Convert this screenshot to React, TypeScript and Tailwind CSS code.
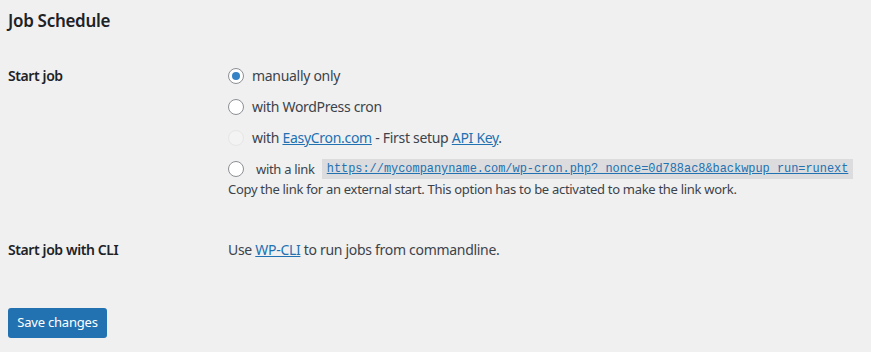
import React, { useState } from 'react';

const font = { fontFamily: '"Noto Sans", "Open Sans", sans-serif' };

const Radio: React.FC<{ checked?: boolean; disabled?: boolean; onClick?: () => void }> = ({ checked, disabled, onClick }) => (
    <span
        onClick={disabled ? undefined : onClick}
        className={`inline-flex h-4 w-4 shrink-0 items-center justify-center rounded-full border ${disabled ? 'border-[#e6e6e6] bg-[#f3f3f3]' : 'border-[#8c8f94] bg-white cursor-pointer'}`}
    >
        {checked && <span className="h-2 w-2 rounded-full bg-[#3582c4]" />}
    </span>
);

const App: React.FC = () => {
    const [mode, setMode] = useState<'manual' | 'wpcron' | 'link'>('manual');

    return (
        <div className="min-h-screen bg-[#f0f0f1] px-2 text-[#3c434a]" style={font}>
            <h2 className="pt-[10px] text-[17px] leading-[22px] font-semibold tracking-[-0.3px] text-[#1d2327]">Job Schedule</h2>

            <div className="mt-[34px] grid grid-cols-[220px_1fr]">
                <div className="text-[14px] leading-[20px] font-semibold tracking-[-0.4px] text-[#1d2327]">Start job</div>
                <div className="text-[14px] leading-[20px] tracking-[-0.3px]">
                    <div className="flex flex-col gap-[11px]">
                        <label className="flex items-center gap-2">
                            <Radio checked={mode === 'manual'} onClick={() => setMode('manual')} />
                            <span>manually only</span>
                        </label>
                        <label className="flex items-center gap-2">
                            <Radio checked={mode === 'wpcron'} onClick={() => setMode('wpcron')} />
                            <span>with WordPress cron</span>
                        </label>
                        <label className="flex items-center gap-2">
                            <Radio disabled />
                            <span>
                                with <a href="#" className="text-[#2271b1] underline">EasyCron.com</a> - First setup{' '}
                                <a href="#" className="text-[#2271b1] underline">API Key</a>.
                            </span>
                        </label>
                    </div>
                    <label className="mt-[11px] flex items-center">
                        <Radio checked={mode === 'link'} onClick={() => setMode('link')} />
                        <span className="ml-3 text-[13px]">with a link</span>
                        <code
                            className="ml-[7px] whitespace-nowrap bg-[#dcdcde] px-[5px] text-[11.92px] leading-[20px] tracking-normal text-[#2271b1] underline"
                            style={{ fontFamily: '"Liberation Mono", monospace' }}
                        >
                            https://mycompanyname.com/wp-cron.php?_nonce=0d788ac8&amp;backwpup_run=runext
                        </code>
                    </label>
                    <p className="text-[13px] leading-[20px] text-[#3c434a]">
                        Copy the link for an external start. This option has to be activated to make the link work.
                    </p>
                </div>

                <div className="mt-[41px] text-[14px] leading-[20px] font-semibold tracking-[-0.4px] text-[#1d2327]">Start job with CLI</div>
                <div className="mt-[41px] text-[14px] leading-[20px] tracking-[-0.3px]">
                    Use <a href="#" className="text-[#2271b1] underline">WP-CLI</a> to run jobs from commandline.
                </div>
            </div>

            <button className="mt-[48px] h-[30px] w-[99px] rounded-[3px] bg-[#2271b1] text-[13px] tracking-[-0.2px] text-white">
                Save changes
            </button>
        </div>
    );
};

export default App;
